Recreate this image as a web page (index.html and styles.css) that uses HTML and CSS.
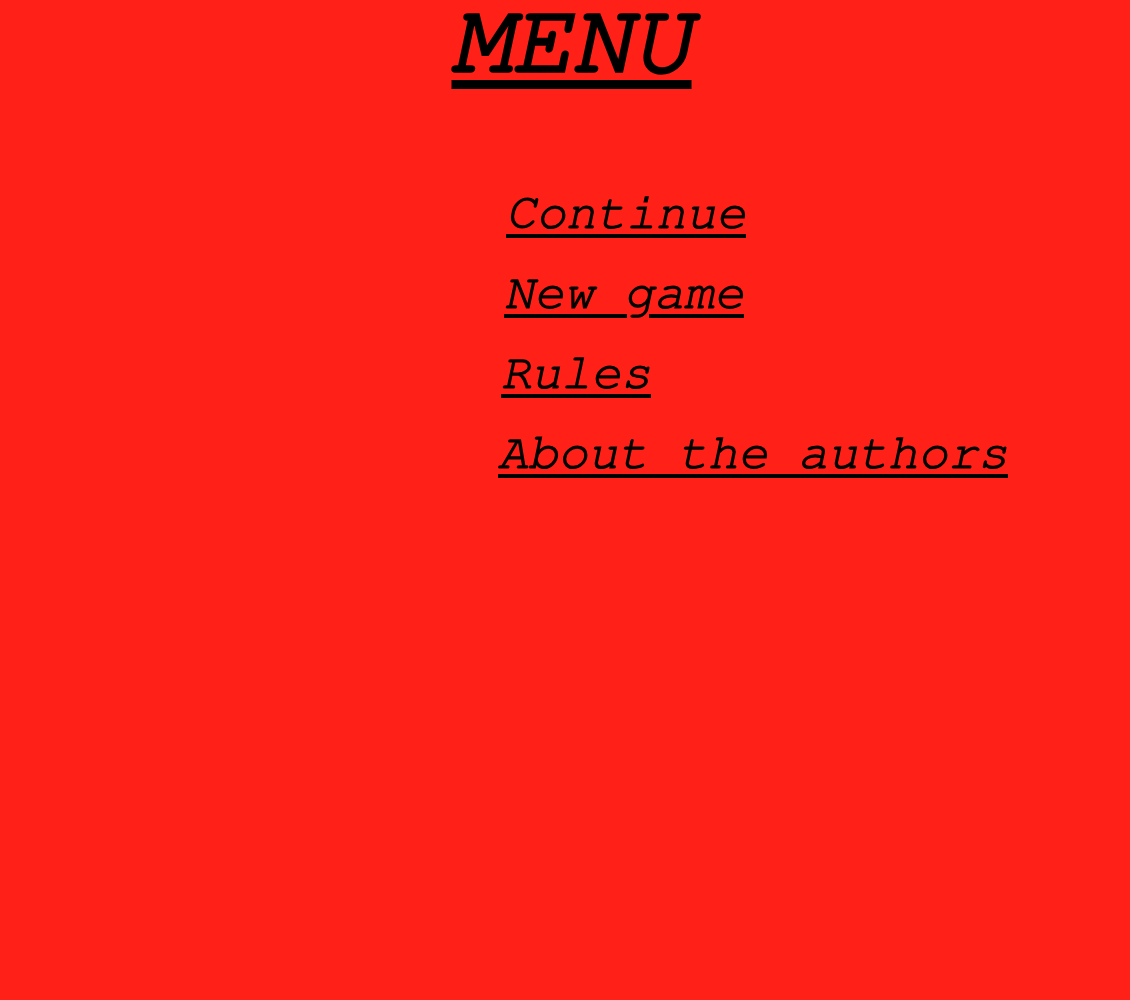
FILE: index.html
```html
<!DOCTYPE html>
<html lang="en">
<head>
<meta charset="utf-8">
<title>Menu</title>
<link rel="stylesheet" href="styles.css">
</head>
<body>
<h1 class="title">MENU</h1>
<ul class="menu">
  <li class="item item-1"><a href="#">Continue</a></li>
  <li class="item item-2"><a href="#">New game</a></li>
  <li class="item item-3"><a href="#">Rules</a></li>
  <li class="item item-4"><a href="#">About the authors</a></li>
</ul>
</body>
</html>
```
FILE: styles.css
```css
html, body {
  margin: 0;
  padding: 0;
  background: #ff2117;
}
body {
  font-family: FreeMono, "Liberation Mono", monospace;
  color: #000;
  min-height: 1000px;
}
.title {
  margin: 0;
  padding-left: 13px;
  text-align: center;
  font-size: 100px;
  font-weight: normal;
  font-style: italic;
  line-height: 82px;
  text-decoration: underline;
  text-decoration-thickness: 9px;
  text-underline-offset: 9px;
  -webkit-text-stroke: 3.5px #000;
}
.menu {
  list-style: none;
  margin: 91px 0 0 0;
  padding: 0 0 0 498px;
}
.item {
  font-size: 50px;
  font-style: italic;
  line-height: 80px;
}
.item a {
  color: #000;
  text-decoration: underline;
  text-decoration-thickness: 4px;
  text-underline-offset: 6px;
  -webkit-text-stroke: 1.2px #000;
}
.item-1 { margin-left: 8px; }
.item-2 { margin-left: 6px; }
.item-3 { margin-left: 3px; }
.item-4 { margin-left: 0; }
```
